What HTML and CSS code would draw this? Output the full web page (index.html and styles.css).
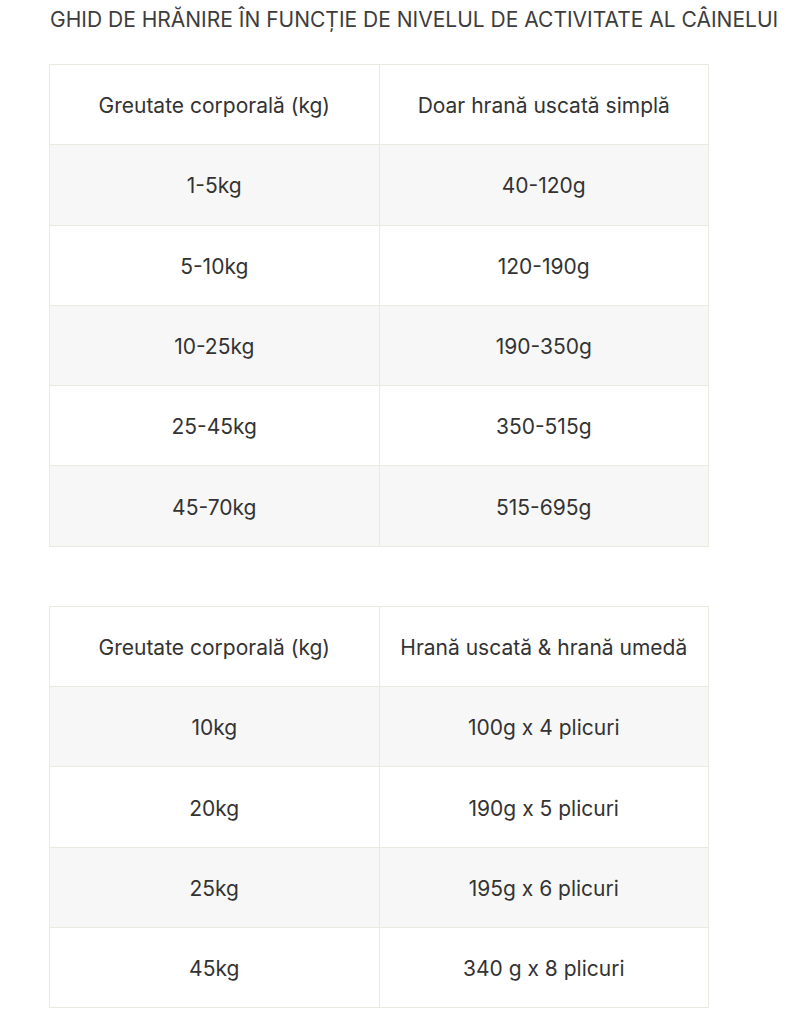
FILE: index.html
```html
<!DOCTYPE html>
<html lang="ro">
<head>
<meta charset="utf-8">
<link rel="stylesheet" href="styles.css">
</head>
<body>
<div class="page">
  <h2 class="title">GHID DE HRĂNIRE ÎN FUNCȚIE DE NIVELUL DE ACTIVITATE AL CÂINELUI</h2>
  <table class="guide">
    <tr><th>Greutate corporală (kg)</th><th>Doar hrană uscată simplă</th></tr>
    <tr class="alt"><td>1-5kg</td><td>40-120g</td></tr>
    <tr><td>5-10kg</td><td>120-190g</td></tr>
    <tr class="alt"><td>10-25kg</td><td>190-350g</td></tr>
    <tr><td>25-45kg</td><td>350-515g</td></tr>
    <tr class="alt"><td>45-70kg</td><td>515-695g</td></tr>
  </table>
  <table class="guide second">
    <tr><th>Greutate corporală (kg)</th><th>Hrană uscată &amp; hrană umedă</th></tr>
    <tr class="alt"><td>10kg</td><td>100g x 4 plicuri</td></tr>
    <tr><td>20kg</td><td>190g x 5 plicuri</td></tr>
    <tr class="alt"><td>25kg</td><td>195g x 6 plicuri</td></tr>
    <tr><td>45kg</td><td>340 g x 8 plicuri</td></tr>
  </table>
</div>
</body>
</html>
```
FILE: styles.css
```css
html, body {
  margin: 0;
  padding: 0;
  background: #ffffff;
}
body {
  font-family: Inter, "Noto Sans", sans-serif;
  color: #333333;
}
.page {
  padding: 7px 0 0 49px;
}
.title {
  margin: 0 0 31px 1px;
  font-size: 21px;
  font-weight: 400;
  line-height: 26px;
  color: #3d3d3d;
  white-space: nowrap;
}
.guide {
  border-collapse: collapse;
  width: 660px;
  table-layout: fixed;
  margin-bottom: 59px;
}
.guide th, .guide td {
  border: 1px solid #ece9de;
  height: 77.3px;
  padding: 2px 10px 0;
  text-align: center;
  vertical-align: middle;
  font-size: 21px;
  font-weight: 400;
  color: #333333;
}
.guide tr.alt td {
  background: #f7f7f7;
}
```
